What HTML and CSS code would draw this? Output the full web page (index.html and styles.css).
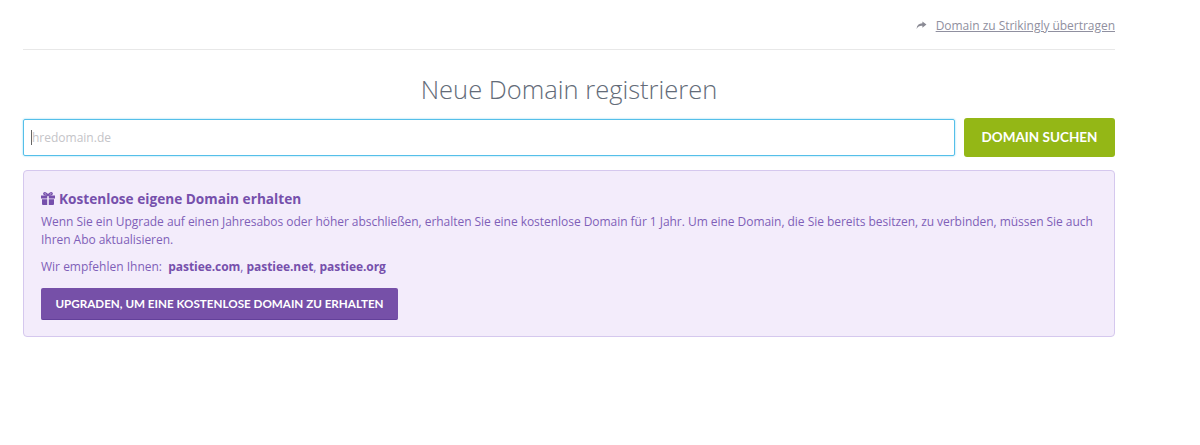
FILE: index.html
```html
<!DOCTYPE html>
<html lang="de">
<head>
<meta charset="utf-8">
<title>Neue Domain registrieren</title>
<link rel="stylesheet" href="styles.css">
</head>
<body>
<main class="page">
  <div class="top">
    <svg class="share" viewBox="0 0 12 10" width="11" height="9"><path d="M7 0.500 L11.500 4 L7 7.500 V5.400 C4 5.200 2 6 0.500 9 C0.800 5 3 2.800 7 2.600 Z" fill="#8a8a94"/></svg>
    <a class="transfer" href="#">Domain zu Strikingly übertragen</a>
  </div>
  <h1 class="title">Neue Domain registrieren</h1>
  <div class="search">
    <div class="input"><span class="caret"></span><span class="ph">hredomain.de</span></div>
    <button class="go">DOMAIN SUCHEN</button>
  </div>
  <section class="box">
    <h2 class="head">
      <svg class="gift" viewBox="0 0 14 13" width="14" height="13"><path fill="#7650ac" d="M0 3.500h6.200v3H0zM7.800 3.500H14v3H7.800zM1 7.300h5.200V13H2a1 1 0 0 1-1-1zM7.800 7.300H13V12a1 1 0 0 1-1 1H7.800z"/><path fill="none" stroke="#7650ac" stroke-width="1.400" d="M7 3.200C5.500 0.500 3 0.200 2.800 1.700 2.700 3 5 3.200 7 3.200 9 3.200 11.300 3 11.200 1.700 11 0.200 8.500 0.500 7 3.200Z"/></svg>
      Kostenlose eigene Domain erhalten
    </h2>
    <p class="text">Wenn Sie ein Upgrade auf einen Jahresabos oder höher abschließen, erhalten Sie eine kostenlose Domain für 1 Jahr. Um eine Domain, die Sie bereits besitzen, zu verbinden, müssen Sie auch Ihren Abo aktualisieren.</p>
    <p class="rec">Wir empfehlen Ihnen:&nbsp; <b>pastiee.com</b>, <b>pastiee.net</b>, <b>pastiee.org</b></p>
    <button class="upgrade">UPGRADEN, UM EINE KOSTENLOSE DOMAIN ZU ERHALTEN</button>
  </section>
</main>
</body>
</html>
```
FILE: styles.css
```css
html, body { margin: 0; padding: 0; background: #fff; }
body { font-family: "Open Sans", sans-serif; height: 445px; overflow: hidden; }
.page { width: 1092px; margin-left: 23px; }
.top {
  height: 32px; padding-top: 17px;
  display: flex; justify-content: flex-end; align-items: flex-start; gap: 9px;
  border-bottom: 1px solid #e8e8e8;
}
.share { margin-top: 4px; }
.transfer { font-size: 12px; line-height: 18px; color: #9090a0; text-decoration: underline; letter-spacing: -0.03px; }
.title {
  margin: 21px 0 0; font-weight: 300; font-size: 25.500px; line-height: 36px;
  text-align: center; color: #636b78;
}
.search { display: flex; gap: 9px; margin-top: 11px; align-items: center; }
.input {
  flex: 1; height: 37px; box-sizing: border-box; border: 1px solid #55bfe9; border-radius: 2px;
  display: flex; align-items: center; padding-left: 7px; padding-bottom: 1px; font-size: 12px;
  box-shadow: 0 0 2px #7fd0ef;
}
.caret { width: 1px; height: 15px; background: #666; }
.ph { color: #c4c4c8; }
.go {
  width: 151px; height: 39px; border: 0; border-radius: 3px; background: #94b716; color: #fff;
  font-family: Lato, sans-serif; font-weight: 700; font-size: 13.500px; padding: 0 0 2px;
}
.box {
  margin-top: 13px; height: 167px; box-sizing: border-box; padding: 18px 17px 0;
  background: #f3ecfb; border: 1px solid #d5c8ee; border-radius: 4px; color: #7f5fb8;
}
.head {
  margin: 0; font-size: 13.650px; line-height: 19px; font-weight: 700; color: #7650ac;
  display: flex; align-items: center; gap: 4px;
}
.text { margin: 5px 0 0; font-size: 12px; line-height: 18px; letter-spacing: -0.04px; }
.rec { margin: 9px 0 0; font-size: 12px; line-height: 18px; }
.rec b { letter-spacing: -0.06px; color: #7650ac; }
.upgrade {
  display: block; margin-top: 12px; width: 357px; height: 32px; padding: 0 0 1px;
  border: 0; border-bottom: 1px solid #63409a; border-radius: 2px; background: #7650a8; color: #fff;
  font-family: Lato, sans-serif; font-weight: 700; font-size: 11.650px;
}
```
